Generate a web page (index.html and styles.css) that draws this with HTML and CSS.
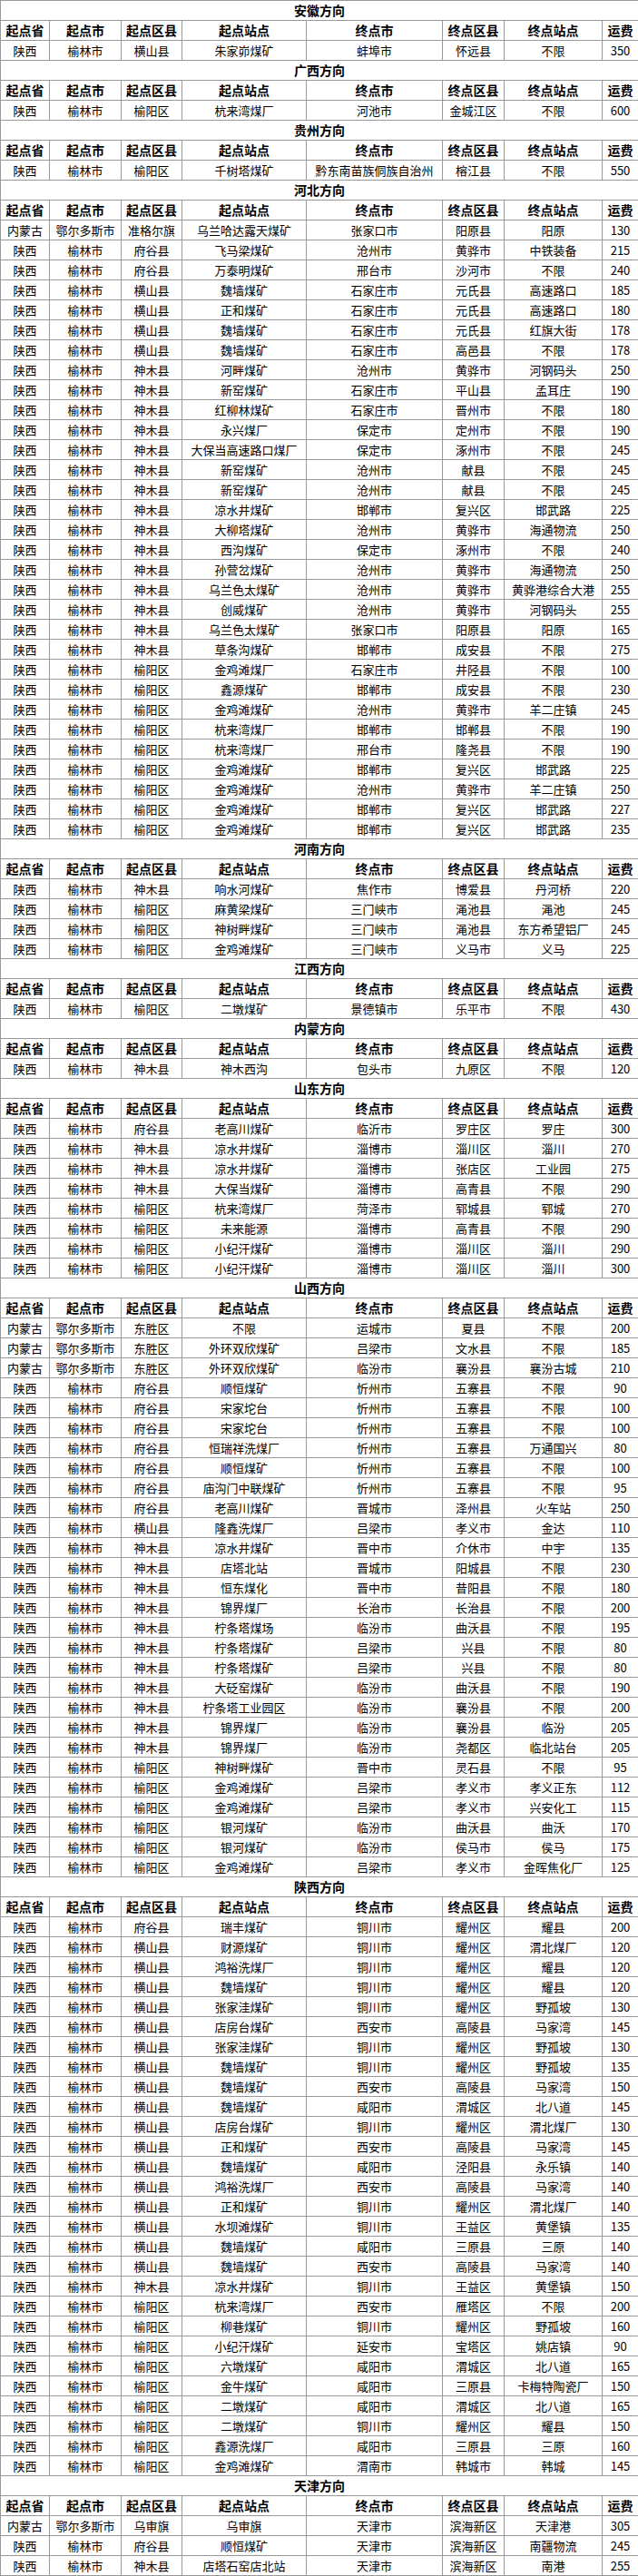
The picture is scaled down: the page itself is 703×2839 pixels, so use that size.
FILE: index.html
```
<!DOCTYPE html>
<html lang="zh-CN">
<head>
<meta charset="utf-8">
<title>运费表</title>
<link rel="stylesheet" href="styles.css">
</head>
<body>
<table class="freight">
<colgroup>
<col class="c-prov"><col class="c-city"><col class="c-dist"><col class="c-site"><col class="c-ecity"><col class="c-edist"><col class="c-esite"><col class="c-fee">
</colgroup>
<tbody>
<tr class="title"><th colspan="8">安徽方向</th></tr>
<tr class="head"><th>起点省</th><th>起点市</th><th>起点区县</th><th>起点站点</th><th>终点市</th><th>终点区县</th><th>终点站点</th><th>运费</th></tr>
<tr><td>陕西</td><td>榆林市</td><td>横山县</td><td>朱家峁煤矿</td><td>蚌埠市</td><td>怀远县</td><td>不限</td><td>350</td></tr>

<tr class="title"><th colspan="8">广西方向</th></tr>
<tr class="head"><th>起点省</th><th>起点市</th><th>起点区县</th><th>起点站点</th><th>终点市</th><th>终点区县</th><th>终点站点</th><th>运费</th></tr>
<tr><td>陕西</td><td>榆林市</td><td>榆阳区</td><td>杭来湾煤厂</td><td>河池市</td><td>金城江区</td><td>不限</td><td>600</td></tr>

<tr class="title"><th colspan="8">贵州方向</th></tr>
<tr class="head"><th>起点省</th><th>起点市</th><th>起点区县</th><th>起点站点</th><th>终点市</th><th>终点区县</th><th>终点站点</th><th>运费</th></tr>
<tr><td>陕西</td><td>榆林市</td><td>榆阳区</td><td>千树塔煤矿</td><td>黔东南苗族侗族自治州</td><td>榕江县</td><td>不限</td><td>550</td></tr>

<tr class="title"><th colspan="8">河北方向</th></tr>
<tr class="head"><th>起点省</th><th>起点市</th><th>起点区县</th><th>起点站点</th><th>终点市</th><th>终点区县</th><th>终点站点</th><th>运费</th></tr>
<tr><td>内蒙古</td><td>鄂尔多斯市</td><td>准格尔旗</td><td>乌兰哈达露天煤矿</td><td>张家口市</td><td>阳原县</td><td>阳原</td><td>130</td></tr>
<tr><td>陕西</td><td>榆林市</td><td>府谷县</td><td>飞马梁煤矿</td><td>沧州市</td><td>黄骅市</td><td>中铁装备</td><td>215</td></tr>
<tr><td>陕西</td><td>榆林市</td><td>府谷县</td><td>万泰明煤矿</td><td>邢台市</td><td>沙河市</td><td>不限</td><td>240</td></tr>
<tr><td>陕西</td><td>榆林市</td><td>横山县</td><td>魏墙煤矿</td><td>石家庄市</td><td>元氏县</td><td>高速路口</td><td>185</td></tr>
<tr><td>陕西</td><td>榆林市</td><td>横山县</td><td>正和煤矿</td><td>石家庄市</td><td>元氏县</td><td>高速路口</td><td>180</td></tr>
<tr><td>陕西</td><td>榆林市</td><td>横山县</td><td>魏墙煤矿</td><td>石家庄市</td><td>元氏县</td><td>红旗大街</td><td>178</td></tr>
<tr><td>陕西</td><td>榆林市</td><td>横山县</td><td>魏墙煤矿</td><td>石家庄市</td><td>高邑县</td><td>不限</td><td>178</td></tr>
<tr><td>陕西</td><td>榆林市</td><td>神木县</td><td>河畔煤矿</td><td>沧州市</td><td>黄骅市</td><td>河钢码头</td><td>250</td></tr>
<tr><td>陕西</td><td>榆林市</td><td>神木县</td><td>新窑煤矿</td><td>石家庄市</td><td>平山县</td><td>孟耳庄</td><td>190</td></tr>
<tr><td>陕西</td><td>榆林市</td><td>神木县</td><td>红柳林煤矿</td><td>石家庄市</td><td>晋州市</td><td>不限</td><td>180</td></tr>
<tr><td>陕西</td><td>榆林市</td><td>神木县</td><td>永兴煤厂</td><td>保定市</td><td>定州市</td><td>不限</td><td>190</td></tr>
<tr><td>陕西</td><td>榆林市</td><td>神木县</td><td>大保当高速路口煤厂</td><td>保定市</td><td>涿州市</td><td>不限</td><td>245</td></tr>
<tr><td>陕西</td><td>榆林市</td><td>神木县</td><td>新窑煤矿</td><td>沧州市</td><td>献县</td><td>不限</td><td>245</td></tr>
<tr><td>陕西</td><td>榆林市</td><td>神木县</td><td>新窑煤矿</td><td>沧州市</td><td>献县</td><td>不限</td><td>245</td></tr>
<tr><td>陕西</td><td>榆林市</td><td>神木县</td><td>凉水井煤矿</td><td>邯郸市</td><td>复兴区</td><td>邯武路</td><td>225</td></tr>
<tr><td>陕西</td><td>榆林市</td><td>神木县</td><td>大柳塔煤矿</td><td>沧州市</td><td>黄骅市</td><td>海通物流</td><td>250</td></tr>
<tr><td>陕西</td><td>榆林市</td><td>神木县</td><td>西沟煤矿</td><td>保定市</td><td>涿州市</td><td>不限</td><td>240</td></tr>
<tr><td>陕西</td><td>榆林市</td><td>神木县</td><td>孙营岔煤矿</td><td>沧州市</td><td>黄骅市</td><td>海通物流</td><td>250</td></tr>
<tr><td>陕西</td><td>榆林市</td><td>神木县</td><td>乌兰色太煤矿</td><td>沧州市</td><td>黄骅市</td><td>黄骅港综合大港</td><td>255</td></tr>
<tr><td>陕西</td><td>榆林市</td><td>神木县</td><td>创威煤矿</td><td>沧州市</td><td>黄骅市</td><td>河钢码头</td><td>255</td></tr>
<tr><td>陕西</td><td>榆林市</td><td>神木县</td><td>乌兰色太煤矿</td><td>张家口市</td><td>阳原县</td><td>阳原</td><td>165</td></tr>
<tr><td>陕西</td><td>榆林市</td><td>神木县</td><td>草条沟煤矿</td><td>邯郸市</td><td>成安县</td><td>不限</td><td>275</td></tr>
<tr><td>陕西</td><td>榆林市</td><td>榆阳区</td><td>金鸡滩煤厂</td><td>石家庄市</td><td>井陉县</td><td>不限</td><td>100</td></tr>
<tr><td>陕西</td><td>榆林市</td><td>榆阳区</td><td>鑫源煤矿</td><td>邯郸市</td><td>成安县</td><td>不限</td><td>230</td></tr>
<tr><td>陕西</td><td>榆林市</td><td>榆阳区</td><td>金鸡滩煤矿</td><td>沧州市</td><td>黄骅市</td><td>羊二庄镇</td><td>245</td></tr>
<tr><td>陕西</td><td>榆林市</td><td>榆阳区</td><td>杭来湾煤厂</td><td>邯郸市</td><td>邯郸县</td><td>不限</td><td>190</td></tr>
<tr><td>陕西</td><td>榆林市</td><td>榆阳区</td><td>杭来湾煤厂</td><td>邢台市</td><td>隆尧县</td><td>不限</td><td>190</td></tr>
<tr><td>陕西</td><td>榆林市</td><td>榆阳区</td><td>金鸡滩煤矿</td><td>邯郸市</td><td>复兴区</td><td>邯武路</td><td>225</td></tr>
<tr><td>陕西</td><td>榆林市</td><td>榆阳区</td><td>金鸡滩煤矿</td><td>沧州市</td><td>黄骅市</td><td>羊二庄镇</td><td>250</td></tr>
<tr><td>陕西</td><td>榆林市</td><td>榆阳区</td><td>金鸡滩煤矿</td><td>邯郸市</td><td>复兴区</td><td>邯武路</td><td>227</td></tr>
<tr><td>陕西</td><td>榆林市</td><td>榆阳区</td><td>金鸡滩煤矿</td><td>邯郸市</td><td>复兴区</td><td>邯武路</td><td>235</td></tr>

<tr class="title"><th colspan="8">河南方向</th></tr>
<tr class="head"><th>起点省</th><th>起点市</th><th>起点区县</th><th>起点站点</th><th>终点市</th><th>终点区县</th><th>终点站点</th><th>运费</th></tr>
<tr><td>陕西</td><td>榆林市</td><td>神木县</td><td>响水河煤矿</td><td>焦作市</td><td>博爱县</td><td>丹河桥</td><td>220</td></tr>
<tr><td>陕西</td><td>榆林市</td><td>榆阳区</td><td>麻黄梁煤矿</td><td>三门峡市</td><td>渑池县</td><td>渑池</td><td>245</td></tr>
<tr><td>陕西</td><td>榆林市</td><td>榆阳区</td><td>神树畔煤矿</td><td>三门峡市</td><td>渑池县</td><td>东方希望铝厂</td><td>245</td></tr>
<tr><td>陕西</td><td>榆林市</td><td>榆阳区</td><td>金鸡滩煤矿</td><td>三门峡市</td><td>义马市</td><td>义马</td><td>225</td></tr>

<tr class="title"><th colspan="8">江西方向</th></tr>
<tr class="head"><th>起点省</th><th>起点市</th><th>起点区县</th><th>起点站点</th><th>终点市</th><th>终点区县</th><th>终点站点</th><th>运费</th></tr>
<tr><td>陕西</td><td>榆林市</td><td>榆阳区</td><td>二墩煤矿</td><td>景德镇市</td><td>乐平市</td><td>不限</td><td>430</td></tr>

<tr class="title"><th colspan="8">内蒙方向</th></tr>
<tr class="head"><th>起点省</th><th>起点市</th><th>起点区县</th><th>起点站点</th><th>终点市</th><th>终点区县</th><th>终点站点</th><th>运费</th></tr>
<tr><td>陕西</td><td>榆林市</td><td>神木县</td><td>神木西沟</td><td>包头市</td><td>九原区</td><td>不限</td><td>120</td></tr>

<tr class="title"><th colspan="8">山东方向</th></tr>
<tr class="head"><th>起点省</th><th>起点市</th><th>起点区县</th><th>起点站点</th><th>终点市</th><th>终点区县</th><th>终点站点</th><th>运费</th></tr>
<tr><td>陕西</td><td>榆林市</td><td>府谷县</td><td>老高川煤矿</td><td>临沂市</td><td>罗庄区</td><td>罗庄</td><td>300</td></tr>
<tr><td>陕西</td><td>榆林市</td><td>神木县</td><td>凉水井煤矿</td><td>淄博市</td><td>淄川区</td><td>淄川</td><td>270</td></tr>
<tr><td>陕西</td><td>榆林市</td><td>神木县</td><td>凉水井煤矿</td><td>淄博市</td><td>张店区</td><td>工业园</td><td>275</td></tr>
<tr><td>陕西</td><td>榆林市</td><td>神木县</td><td>大保当煤矿</td><td>淄博市</td><td>高青县</td><td>不限</td><td>290</td></tr>
<tr><td>陕西</td><td>榆林市</td><td>榆阳区</td><td>杭来湾煤厂</td><td>菏泽市</td><td>郓城县</td><td>郓城</td><td>270</td></tr>
<tr><td>陕西</td><td>榆林市</td><td>榆阳区</td><td>未来能源</td><td>淄博市</td><td>高青县</td><td>不限</td><td>290</td></tr>
<tr><td>陕西</td><td>榆林市</td><td>榆阳区</td><td>小纪汗煤矿</td><td>淄博市</td><td>淄川区</td><td>淄川</td><td>290</td></tr>
<tr><td>陕西</td><td>榆林市</td><td>榆阳区</td><td>小纪汗煤矿</td><td>淄博市</td><td>淄川区</td><td>淄川</td><td>300</td></tr>

<tr class="title"><th colspan="8">山西方向</th></tr>
<tr class="head"><th>起点省</th><th>起点市</th><th>起点区县</th><th>起点站点</th><th>终点市</th><th>终点区县</th><th>终点站点</th><th>运费</th></tr>
<tr><td>内蒙古</td><td>鄂尔多斯市</td><td>东胜区</td><td>不限</td><td>运城市</td><td>夏县</td><td>不限</td><td>200</td></tr>
<tr><td>内蒙古</td><td>鄂尔多斯市</td><td>东胜区</td><td>外环双欣煤矿</td><td>吕梁市</td><td>文水县</td><td>不限</td><td>185</td></tr>
<tr><td>内蒙古</td><td>鄂尔多斯市</td><td>东胜区</td><td>外环双欣煤矿</td><td>临汾市</td><td>襄汾县</td><td>襄汾古城</td><td>210</td></tr>
<tr><td>陕西</td><td>榆林市</td><td>府谷县</td><td>顺恒煤矿</td><td>忻州市</td><td>五寨县</td><td>不限</td><td>90</td></tr>
<tr><td>陕西</td><td>榆林市</td><td>府谷县</td><td>宋家坨台</td><td>忻州市</td><td>五寨县</td><td>不限</td><td>100</td></tr>
<tr><td>陕西</td><td>榆林市</td><td>府谷县</td><td>宋家坨台</td><td>忻州市</td><td>五寨县</td><td>不限</td><td>100</td></tr>
<tr><td>陕西</td><td>榆林市</td><td>府谷县</td><td>恒瑞祥洗煤厂</td><td>忻州市</td><td>五寨县</td><td>万通国兴</td><td>80</td></tr>
<tr><td>陕西</td><td>榆林市</td><td>府谷县</td><td>顺恒煤矿</td><td>忻州市</td><td>五寨县</td><td>不限</td><td>100</td></tr>
<tr><td>陕西</td><td>榆林市</td><td>府谷县</td><td>庙沟门中联煤矿</td><td>忻州市</td><td>五寨县</td><td>不限</td><td>95</td></tr>
<tr><td>陕西</td><td>榆林市</td><td>府谷县</td><td>老高川煤矿</td><td>晋城市</td><td>泽州县</td><td>火车站</td><td>250</td></tr>
<tr><td>陕西</td><td>榆林市</td><td>横山县</td><td>隆鑫洗煤厂</td><td>吕梁市</td><td>孝义市</td><td>金达</td><td>110</td></tr>
<tr><td>陕西</td><td>榆林市</td><td>神木县</td><td>凉水井煤矿</td><td>晋中市</td><td>介休市</td><td>中宇</td><td>135</td></tr>
<tr><td>陕西</td><td>榆林市</td><td>神木县</td><td>店塔北站</td><td>晋城市</td><td>阳城县</td><td>不限</td><td>230</td></tr>
<tr><td>陕西</td><td>榆林市</td><td>神木县</td><td>恒东煤化</td><td>晋中市</td><td>昔阳县</td><td>不限</td><td>180</td></tr>
<tr><td>陕西</td><td>榆林市</td><td>神木县</td><td>锦界煤厂</td><td>长治市</td><td>长治县</td><td>不限</td><td>200</td></tr>
<tr><td>陕西</td><td>榆林市</td><td>神木县</td><td>柠条塔煤场</td><td>临汾市</td><td>曲沃县</td><td>不限</td><td>195</td></tr>
<tr><td>陕西</td><td>榆林市</td><td>神木县</td><td>柠条塔煤矿</td><td>吕梁市</td><td>兴县</td><td>不限</td><td>80</td></tr>
<tr><td>陕西</td><td>榆林市</td><td>神木县</td><td>柠条塔煤矿</td><td>吕梁市</td><td>兴县</td><td>不限</td><td>80</td></tr>
<tr><td>陕西</td><td>榆林市</td><td>神木县</td><td>大砭窑煤矿</td><td>临汾市</td><td>曲沃县</td><td>不限</td><td>190</td></tr>
<tr><td>陕西</td><td>榆林市</td><td>神木县</td><td>柠条塔工业园区</td><td>临汾市</td><td>襄汾县</td><td>不限</td><td>200</td></tr>
<tr><td>陕西</td><td>榆林市</td><td>神木县</td><td>锦界煤厂</td><td>临汾市</td><td>襄汾县</td><td>临汾</td><td>205</td></tr>
<tr><td>陕西</td><td>榆林市</td><td>神木县</td><td>锦界煤厂</td><td>临汾市</td><td>尧都区</td><td>临北站台</td><td>205</td></tr>
<tr><td>陕西</td><td>榆林市</td><td>榆阳区</td><td>神树畔煤矿</td><td>晋中市</td><td>灵石县</td><td>不限</td><td>95</td></tr>
<tr><td>陕西</td><td>榆林市</td><td>榆阳区</td><td>金鸡滩煤矿</td><td>吕梁市</td><td>孝义市</td><td>孝义正东</td><td>112</td></tr>
<tr><td>陕西</td><td>榆林市</td><td>榆阳区</td><td>金鸡滩煤矿</td><td>吕梁市</td><td>孝义市</td><td>兴安化工</td><td>115</td></tr>
<tr><td>陕西</td><td>榆林市</td><td>榆阳区</td><td>银河煤矿</td><td>临汾市</td><td>曲沃县</td><td>曲沃</td><td>170</td></tr>
<tr><td>陕西</td><td>榆林市</td><td>榆阳区</td><td>银河煤矿</td><td>临汾市</td><td>侯马市</td><td>侯马</td><td>175</td></tr>
<tr><td>陕西</td><td>榆林市</td><td>榆阳区</td><td>金鸡滩煤矿</td><td>吕梁市</td><td>孝义市</td><td>金晖焦化厂</td><td>125</td></tr>

<tr class="title"><th colspan="8">陕西方向</th></tr>
<tr class="head"><th>起点省</th><th>起点市</th><th>起点区县</th><th>起点站点</th><th>终点市</th><th>终点区县</th><th>终点站点</th><th>运费</th></tr>
<tr><td>陕西</td><td>榆林市</td><td>府谷县</td><td>瑞丰煤矿</td><td>铜川市</td><td>耀州区</td><td>耀县</td><td>200</td></tr>
<tr><td>陕西</td><td>榆林市</td><td>横山县</td><td>财源煤矿</td><td>铜川市</td><td>耀州区</td><td>渭北煤厂</td><td>120</td></tr>
<tr><td>陕西</td><td>榆林市</td><td>横山县</td><td>鸿裕洗煤厂</td><td>铜川市</td><td>耀州区</td><td>耀县</td><td>120</td></tr>
<tr><td>陕西</td><td>榆林市</td><td>横山县</td><td>魏墙煤矿</td><td>铜川市</td><td>耀州区</td><td>耀县</td><td>120</td></tr>
<tr><td>陕西</td><td>榆林市</td><td>横山县</td><td>张家洼煤矿</td><td>铜川市</td><td>耀州区</td><td>野孤坡</td><td>130</td></tr>
<tr><td>陕西</td><td>榆林市</td><td>横山县</td><td>店房台煤矿</td><td>西安市</td><td>高陵县</td><td>马家湾</td><td>145</td></tr>
<tr><td>陕西</td><td>榆林市</td><td>横山县</td><td>张家洼煤矿</td><td>铜川市</td><td>耀州区</td><td>野孤坡</td><td>130</td></tr>
<tr><td>陕西</td><td>榆林市</td><td>横山县</td><td>魏墙煤矿</td><td>铜川市</td><td>耀州区</td><td>野孤坡</td><td>135</td></tr>
<tr><td>陕西</td><td>榆林市</td><td>横山县</td><td>魏墙煤矿</td><td>西安市</td><td>高陵县</td><td>马家湾</td><td>150</td></tr>
<tr><td>陕西</td><td>榆林市</td><td>横山县</td><td>魏墙煤矿</td><td>咸阳市</td><td>渭城区</td><td>北八道</td><td>145</td></tr>
<tr><td>陕西</td><td>榆林市</td><td>横山县</td><td>店房台煤矿</td><td>铜川市</td><td>耀州区</td><td>渭北煤厂</td><td>130</td></tr>
<tr><td>陕西</td><td>榆林市</td><td>横山县</td><td>正和煤矿</td><td>西安市</td><td>高陵县</td><td>马家湾</td><td>145</td></tr>
<tr><td>陕西</td><td>榆林市</td><td>横山县</td><td>魏墙煤矿</td><td>咸阳市</td><td>泾阳县</td><td>永乐镇</td><td>140</td></tr>
<tr><td>陕西</td><td>榆林市</td><td>横山县</td><td>鸿裕洗煤厂</td><td>西安市</td><td>高陵县</td><td>马家湾</td><td>140</td></tr>
<tr><td>陕西</td><td>榆林市</td><td>横山县</td><td>正和煤矿</td><td>铜川市</td><td>耀州区</td><td>渭北煤厂</td><td>140</td></tr>
<tr><td>陕西</td><td>榆林市</td><td>横山县</td><td>水坝滩煤矿</td><td>铜川市</td><td>王益区</td><td>黄堡镇</td><td>135</td></tr>
<tr><td>陕西</td><td>榆林市</td><td>横山县</td><td>魏墙煤矿</td><td>咸阳市</td><td>三原县</td><td>三原</td><td>140</td></tr>
<tr><td>陕西</td><td>榆林市</td><td>横山县</td><td>魏墙煤矿</td><td>西安市</td><td>高陵县</td><td>马家湾</td><td>140</td></tr>
<tr><td>陕西</td><td>榆林市</td><td>神木县</td><td>凉水井煤矿</td><td>铜川市</td><td>王益区</td><td>黄堡镇</td><td>150</td></tr>
<tr><td>陕西</td><td>榆林市</td><td>榆阳区</td><td>杭来湾煤厂</td><td>西安市</td><td>雁塔区</td><td>不限</td><td>200</td></tr>
<tr><td>陕西</td><td>榆林市</td><td>榆阳区</td><td>柳巷煤矿</td><td>铜川市</td><td>耀州区</td><td>野孤坡</td><td>160</td></tr>
<tr><td>陕西</td><td>榆林市</td><td>榆阳区</td><td>小纪汗煤矿</td><td>延安市</td><td>宝塔区</td><td>姚店镇</td><td>90</td></tr>
<tr><td>陕西</td><td>榆林市</td><td>榆阳区</td><td>六墩煤矿</td><td>咸阳市</td><td>渭城区</td><td>北八道</td><td>165</td></tr>
<tr><td>陕西</td><td>榆林市</td><td>榆阳区</td><td>金牛煤矿</td><td>咸阳市</td><td>三原县</td><td>卡梅特陶瓷厂</td><td>150</td></tr>
<tr><td>陕西</td><td>榆林市</td><td>榆阳区</td><td>二墩煤矿</td><td>咸阳市</td><td>渭城区</td><td>北八道</td><td>165</td></tr>
<tr><td>陕西</td><td>榆林市</td><td>榆阳区</td><td>二墩煤矿</td><td>铜川市</td><td>耀州区</td><td>耀县</td><td>150</td></tr>
<tr><td>陕西</td><td>榆林市</td><td>榆阳区</td><td>鑫源洗煤厂</td><td>咸阳市</td><td>三原县</td><td>三原</td><td>160</td></tr>
<tr><td>陕西</td><td>榆林市</td><td>榆阳区</td><td>金鸡滩煤矿</td><td>渭南市</td><td>韩城市</td><td>韩城</td><td>145</td></tr>

<tr class="title"><th colspan="8">天津方向</th></tr>
<tr class="head"><th>起点省</th><th>起点市</th><th>起点区县</th><th>起点站点</th><th>终点市</th><th>终点区县</th><th>终点站点</th><th>运费</th></tr>
<tr><td>内蒙古</td><td>鄂尔多斯市</td><td>乌审旗</td><td>乌审旗</td><td>天津市</td><td>滨海新区</td><td>天津港</td><td>305</td></tr>
<tr><td>陕西</td><td>榆林市</td><td>府谷县</td><td>顺恒煤矿</td><td>天津市</td><td>滨海新区</td><td>南疆物流</td><td>245</td></tr>
<tr><td>陕西</td><td>榆林市</td><td>神木县</td><td>店塔石窑店北站</td><td>天津市</td><td>滨海新区</td><td>南港</td><td>255</td></tr>
</tbody>
</table>
</body>
</html>
```

FILE: styles.css
```
html, body {
  margin: 0;
  padding: 0;
  background: #ffffff;
}

body {
  font-family: "Noto Sans CJK SC", "Liberation Sans", sans-serif;
  color: #000000;
}

.freight {
  border-collapse: collapse;
  table-layout: fixed;
  width: 703px;
}

.c-prov { width: 54px; }
.c-city { width: 79px; }
.c-dist { width: 67px; }
.c-site { width: 137px; }
.c-ecity { width: 150px; }
.c-edist { width: 68px; }
.c-esite { width: 108px; }
.c-fee { width: 40px; }

.freight td,
.freight th {
  border: 1px solid #999999;
  padding: 0;
  height: 21px;
  line-height: 21px;
  text-align: center;
  vertical-align: middle;
  white-space: nowrap;
  overflow: hidden;
}

.freight td {
  font-size: 13px;
  font-weight: normal;
}

.freight th {
  font-size: 14px;
  font-weight: bold;
}
```
